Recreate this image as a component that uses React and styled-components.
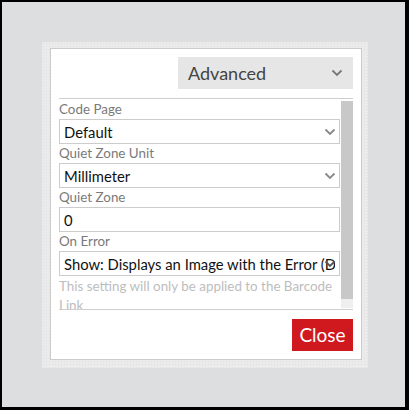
import React from 'react';
import styled, { createGlobalStyle } from 'styled-components';

const GlobalStyle = createGlobalStyle`
  html, body {
    margin: 0;
    padding: 0;
    background: #000;
  }
  body {
    font-family: Lato, 'Liberation Sans', sans-serif;
  }
`;

const Screen = styled.div`
  width: 403px;
  height: 405px;
  margin: 2px 4px 3px 2px;
  background: #dddee0;
  display: flex;
  align-items: flex-start;
  padding: 40px 0 0 40px;
  box-sizing: border-box;
`;

const Frame = styled.div`
  width: 326px;
  height: 326px;
  box-sizing: border-box;
  padding: 6px 6px 8px 8px;
  background-color: #ebebeb;
  background-image: radial-gradient(#e0e0e0 0.6px, transparent 0.7px);
  background-size: 3px 3px;
`;

const Panel = styled.div`
  height: 100%;
  box-sizing: border-box;
  background: #fff;
  border: 1px solid #cbcbcb;
  padding: 8px 8px 7px 8px;
  display: flex;
  flex-direction: column;
`;

const Header = styled.div`
  display: flex;
  justify-content: flex-end;
  padding-bottom: 9px;
`;

const ModeSelect = styled.div`
  width: 175px;
  height: 32px;
  box-sizing: border-box;
  background: #e6e6e6;
  display: flex;
  align-items: center;
  justify-content: space-between;
  padding: 0 10px 1px 10px;
  font-size: 18px;
  color: #444;
`;

const Scroll = styled.div`
  height: 210px;
  border-top: 1px solid #cfcfcf;
  border-bottom: 1px solid #cfcfcf;
  display: flex;
`;

const Content = styled.div`
  flex: 1;
  min-width: 0;
  overflow: hidden;
  padding: 1px 1px 0 0;
`;

const Track = styled.div`
  flex: none;
  width: 12px;
  margin: 2px 0 1px;
  background: #efefef;
`;

const Thumb = styled.div`
  height: 198px;
  background: #c8c8c8;
`;

const Label = styled.div`
  font-size: 13.4px;
  line-height: 19px;
  color: #7a7a7a;
`;

const Field = styled.div`
  height: 25px;
  box-sizing: border-box;
  border: 1px solid #cccccc;
  display: flex;
  align-items: center;
  padding: 0 3px 0 4px;
  font-size: 14.8px;
  color: #111;
  white-space: nowrap;
  overflow: hidden;
`;

const FieldText = styled.span`
  flex: 1;
  overflow: hidden;
`;

const Chevron = styled.svg`
  flex: none;
  width: 12px;
  height: 8px;
  margin-left: ${p => (p.$overlap ? '-11px' : '4px')};
`;

const Help = styled.div`
  font-size: 13.4px;
  line-height: 19px;
  color: #bdbdbd;
  margin-top: 1px;
`;

const Footer = styled.div`
  display: flex;
  justify-content: flex-end;
  padding-top: 9px;
`;

const CloseButton = styled.button`
  width: 61px;
  height: 32px;
  border: 0;
  background: #d0191f;
  color: #fff;
  font-family: inherit;
  font-size: 19px;
  padding: 0 0 1px;
  cursor: pointer;
`;

const Arrow = ({ overlap, color = '#888' }) => (
  <Chevron $overlap={overlap} viewBox="0 0 12 8" fill="none">
    <path d="M1.5 1.5 L6 6 L10.5 1.5" stroke={color} strokeWidth="1.8" />
  </Chevron>
);

function App() {
  return (
    <>
      <GlobalStyle />
      <Screen>
        <Frame>
          <Panel>
            <Header>
              <ModeSelect>
                <span>Advanced</span>
                <Arrow color="#777" />
              </ModeSelect>
            </Header>
            <Scroll>
              <Content>
                <Label>Code Page</Label>
                <Field>
                  <FieldText>Default</FieldText>
                  <Arrow />
                </Field>
                <Label>Quiet Zone Unit</Label>
                <Field>
                  <FieldText>Millimeter</FieldText>
                  <Arrow />
                </Field>
                <Label>Quiet Zone</Label>
                <Field>
                  <FieldText>0</FieldText>
                </Field>
                <Label>On Error</Label>
                <Field>
                  <FieldText>Show: Displays an Image with the Error (Default)</FieldText>
                  <Arrow overlap color="#555" />
                </Field>
                <Help>This setting will only be applied to the Barcode Link</Help>
              </Content>
              <Track>
                <Thumb />
              </Track>
            </Scroll>
            <Footer>
              <CloseButton>Close</CloseButton>
            </Footer>
          </Panel>
        </Frame>
      </Screen>
    </>
  );
}

export default App;
